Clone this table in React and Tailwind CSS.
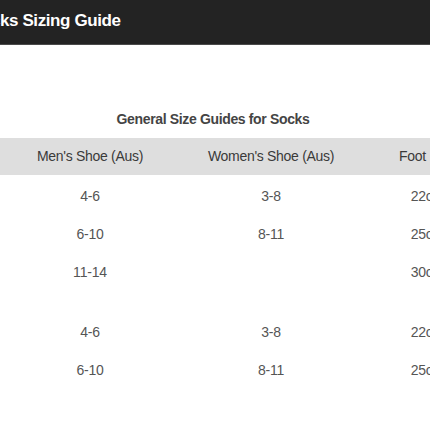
export default function App() {
  const font = { fontFamily: '"Liberation Sans", Arial, sans-serif' };
  const rows1 = [
    ["4-6", "3-8", "22cm - 25cm"],
    ["6-10", "8-11", "25cm - 30cm"],
    ["11-14", "", "30cm - 33cm"],
  ];
  const rows2 = [
    ["4-6", "3-8", "22cm - 25cm"],
    ["6-10", "8-11", "25cm - 30cm"],
  ];
  const Row = ({ r }) => (
    <div className="grid grid-cols-[180px_182px_176px] w-[538px] h-[38px] items-center text-[14px] text-[#555] tracking-[-0.2px]">
      {r.map((c, i) => (
        <div key={i} className="text-center whitespace-nowrap">{c}</div>
      ))}
    </div>
  );
  return (
    <div className="w-[430px] h-[430px] overflow-hidden bg-white" style={font}>
      <div className="h-[45px] bg-[#232323] border-b border-[#4a4a4a] flex items-center overflow-hidden">
        <div className="ml-[-30px] text-white font-bold text-[17px] whitespace-nowrap tracking-[-0.4px] pb-[2px]">
          Socks Sizing Guide
        </div>
      </div>
      <div className="h-[65px]" />
      <div className="text-center text-[14px] font-bold text-[#444] tracking-[-0.35px] leading-[18px]">
        <span className="ml-[-4px]">General Size Guides for Socks</span>
      </div>
      <div className="h-[10px]" />
      <div className="grid grid-cols-[180px_182px_176px] w-[538px] h-[37px] items-center bg-[#dedede] text-[14px] text-[#3a3a3a] tracking-[-0.3px]">
        <div className="text-center whitespace-nowrap">Men's Shoe (Aus)</div>
        <div className="text-center whitespace-nowrap">Women's Shoe (Aus)</div>
        <div className="text-center whitespace-nowrap">Foot Length (cm)</div>
      </div>
      <div className="h-[2px]" />
      {rows1.map((r, i) => (
        <Row key={i} r={r} />
      ))}
      <div className="h-[22px]" />
      {rows2.map((r, i) => (
        <Row key={i} r={r} />
      ))}
    </div>
  );
}
